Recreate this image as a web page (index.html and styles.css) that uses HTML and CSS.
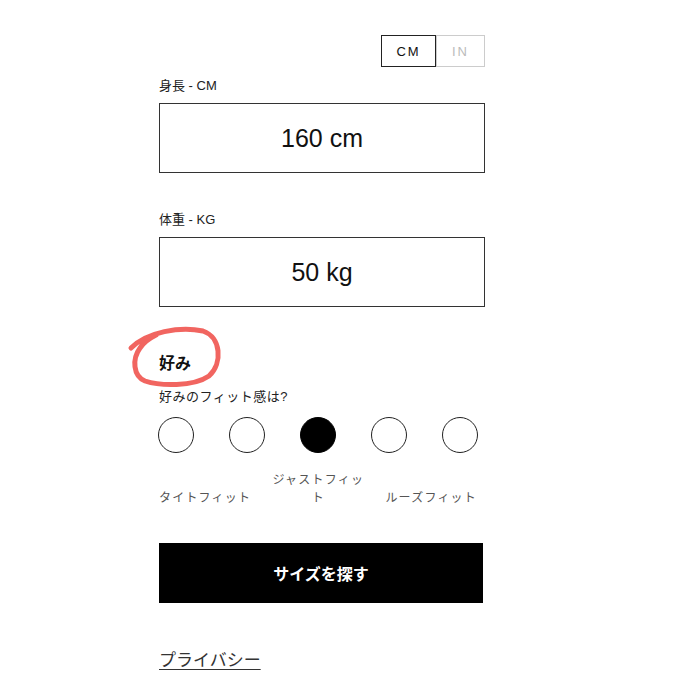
FILE: index.html
```html
<!DOCTYPE html>
<html lang="ja">
<head>
    <meta charset="UTF-8">
    <meta name="viewport" content="width=device-width, initial-scale=1.0">
    <title>サイズを探す</title>
    <link rel="stylesheet" href="styles.css">
</head>
<body>
    <div class="size-form">
        <div class="unit-toggle">
            <button class="unit-btn active">CM</button>
            <button class="unit-btn">IN</button>
        </div>

        <div class="field-label">身長 - CM</div>
        <div class="value-box">160 cm</div>

        <div class="field-label weight-label">体重 - KG</div>
        <div class="value-box">50 kg</div>

        <div class="pref-title">
            <span>好み</span>
            <!-- 手書きの丸 -->
            <svg class="scribble" width="100" height="72" viewBox="0 0 100 72">
                <path d="M6 31 C 22 15, 55 9, 78 14 C 96 20, 98 46, 84 59 C 68 70, 35 69, 20 64 C 8 59, 7 42, 15 31 C 19 25, 25 21, 31 18" fill="none" stroke="#f0544f" stroke-width="5" stroke-linecap="round" stroke-linejoin="round" opacity="0.9"/>
            </svg>
        </div>
        <div class="pref-question">好みのフィット感は?</div>

        <div class="fit-options">
            <span class="fit-dot"></span>
            <span class="fit-dot"></span>
            <span class="fit-dot selected"></span>
            <span class="fit-dot"></span>
            <span class="fit-dot"></span>
        </div>
        <div class="fit-labels">
            <span class="fit-label">タイトフィット</span>
            <span class="fit-label middle">ジャストフィット</span>
            <span class="fit-label">ルーズフィット</span>
        </div>

        <button class="search-btn">サイズを探す</button>

        <a class="privacy-link" href="#">プライバシー</a>
    </div>
</body>
</html>
```

FILE: styles.css
```css
* {
    margin: 0;
    padding: 0;
    box-sizing: border-box;
}

body {
    font-family: "Liberation Sans", Arial, "Noto Sans CJK JP", sans-serif;
    background: #fff;
    color: #111;
    min-height: 100vh;
}

.size-form {
    width: 326px;
    margin-left: 159px;
    padding-top: 35px;
    display: flex;
    flex-direction: column;
}

.unit-toggle {
    display: flex;
    justify-content: flex-end;
}

.unit-btn {
    height: 32px;
    width: 49px;
    background: #fff;
    border: 1px solid #ccc;
    color: #bbb;
    font-family: inherit;
    font-size: 13px;
    letter-spacing: 2px;
}

.unit-btn.active {
    width: 55px;
    border: 1.5px solid #222;
    color: #111;
}

.field-label {
    margin-top: 10px;
    font-size: 13px;
    line-height: 18px;
    color: #222;
}

.weight-label {
    margin-top: 38px;
}

.value-box {
    margin-top: 8px;
    height: 70px;
    border: 1.5px solid #333;
    display: flex;
    align-items: center;
    justify-content: center;
    font-size: 25px;
    color: #111;
}

.pref-title {
    position: relative;
    margin-top: 46px;
    font-size: 16px;
    line-height: 22px;
    font-weight: bold;
    color: #111;
}

.scribble {
    position: absolute;
    left: -34px;
    top: -36px;
    pointer-events: none;
}

.pref-question {
    margin-top: 13px;
    font-size: 13px;
    line-height: 18px;
    letter-spacing: 0.5px;
    color: #222;
}

.fit-options {
    margin-top: 11px;
    margin-left: -1px;
    display: flex;
    gap: 35px;
}

.fit-dot {
    width: 36px;
    height: 36px;
    border-radius: 50%;
    border: 1.5px solid #222;
    background: #fff;
}

.fit-dot.selected {
    background: #000;
    border-color: #000;
}

.fit-labels {
    margin-top: 18px;
    width: 318px;
    display: flex;
    justify-content: space-between;
    align-items: flex-end;
}

.fit-label {
    font-size: 12px;
    line-height: 18px;
    letter-spacing: 1.2px;
    color: #555;
}

.fit-label.middle {
    width: 98px;
    text-align: center;
}

.search-btn {
    margin-top: 36px;
    width: 324px;
    height: 60px;
    background: #000;
    border: none;
    color: #fff;
    font-family: inherit;
    font-size: 16px;
    font-weight: bold;
}

.privacy-link {
    margin-top: 46px;
    align-self: flex-start;
    font-size: 17px;
    line-height: 24px;
    color: #333;
    text-decoration: underline;
    text-underline-offset: 3px;
}
```
